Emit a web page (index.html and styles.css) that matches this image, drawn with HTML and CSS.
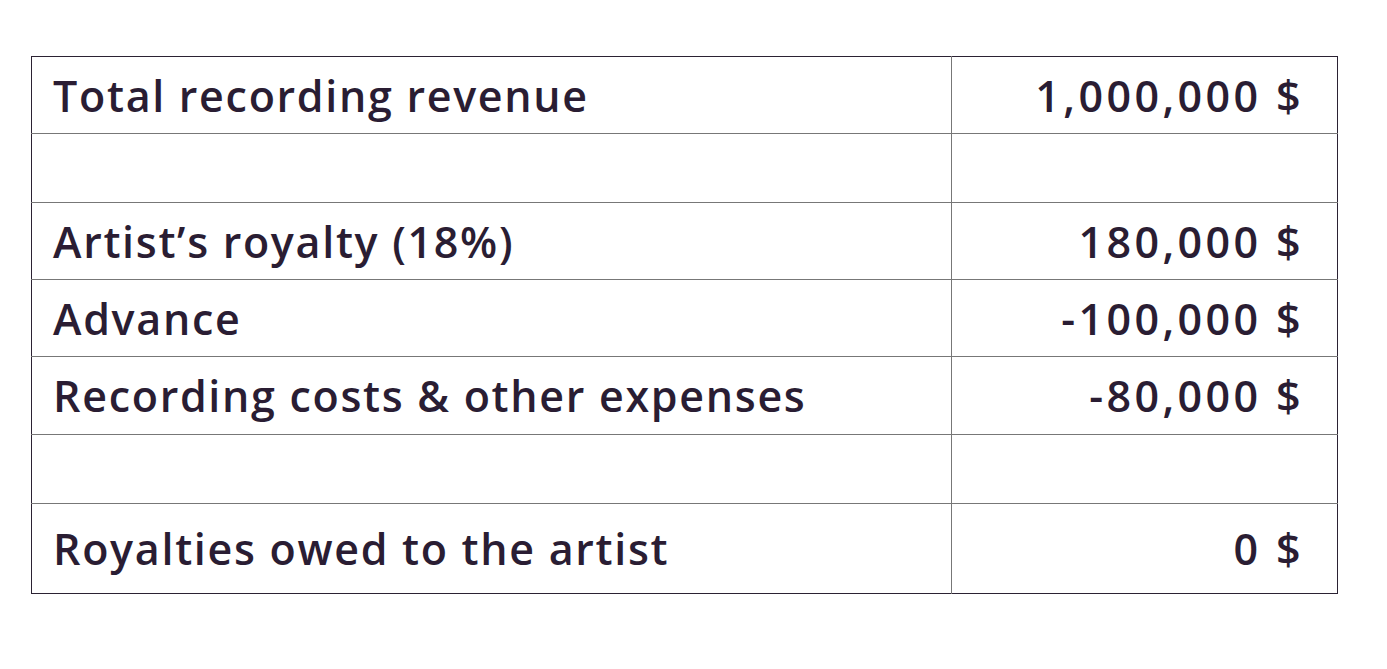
FILE: index.html
```html
<!DOCTYPE html>
<html lang="en">
<head>
<meta charset="utf-8">
<title>Royalties</title>
<link rel="stylesheet" href="styles.css">
</head>
<body>
<main class="page">
  <table class="ledger">
    <tbody>
      <tr class="row row-a"><td class="label">Total recording revenue</td><td class="amount">1,000,000 $</td></tr>
      <tr class="row row-blank"><td class="label"></td><td class="amount"></td></tr>
      <tr class="row row-a"><td class="label">Artist’s royalty (18%)</td><td class="amount">180,000 $</td></tr>
      <tr class="row row-b"><td class="label">Advance</td><td class="amount">-100,000 $</td></tr>
      <tr class="row row-c"><td class="label">Recording costs &amp; other expenses</td><td class="amount">-80,000 $</td></tr>
      <tr class="row row-blank"><td class="label"></td><td class="amount"></td></tr>
      <tr class="row row-last"><td class="label">Royalties owed to the artist</td><td class="amount">0 $</td></tr>
    </tbody>
  </table>
</main>
</body>
</html>
```
FILE: styles.css
```css
html, body {
  margin: 0;
  padding: 0;
  background: #ffffff;
}
.page {
  padding: 56px 0 0 31px;
}
.ledger {
  width: 1307px;
  border-collapse: collapse;
  border: 1px solid #2b2233;
  font-family: "Open Sans", Lato, sans-serif;
  font-weight: 600;
  font-size: 43px;
  letter-spacing: 1.7px;
  color: #2a1d33;
}
.ledger td {
  border-top: 1px solid #777777;
  border-bottom: 1px solid #777777;
  padding: 0;
  vertical-align: middle;
}
.ledger .label {
  width: 898px;
  padding-left: 21px;
  border-right: 1px solid #777777;
}
.ledger .amount {
  text-align: right;
  padding-right: 33px;
  letter-spacing: 3.4px;
}
.row-a { height: 77px; }
.row-b { height: 77px; }
.row-c { height: 78px; }
.row-blank { height: 69px; }
.row-last { height: 90px; }
.row-last td { border-bottom: none; }
.row:first-child td { border-top: none; }
```
